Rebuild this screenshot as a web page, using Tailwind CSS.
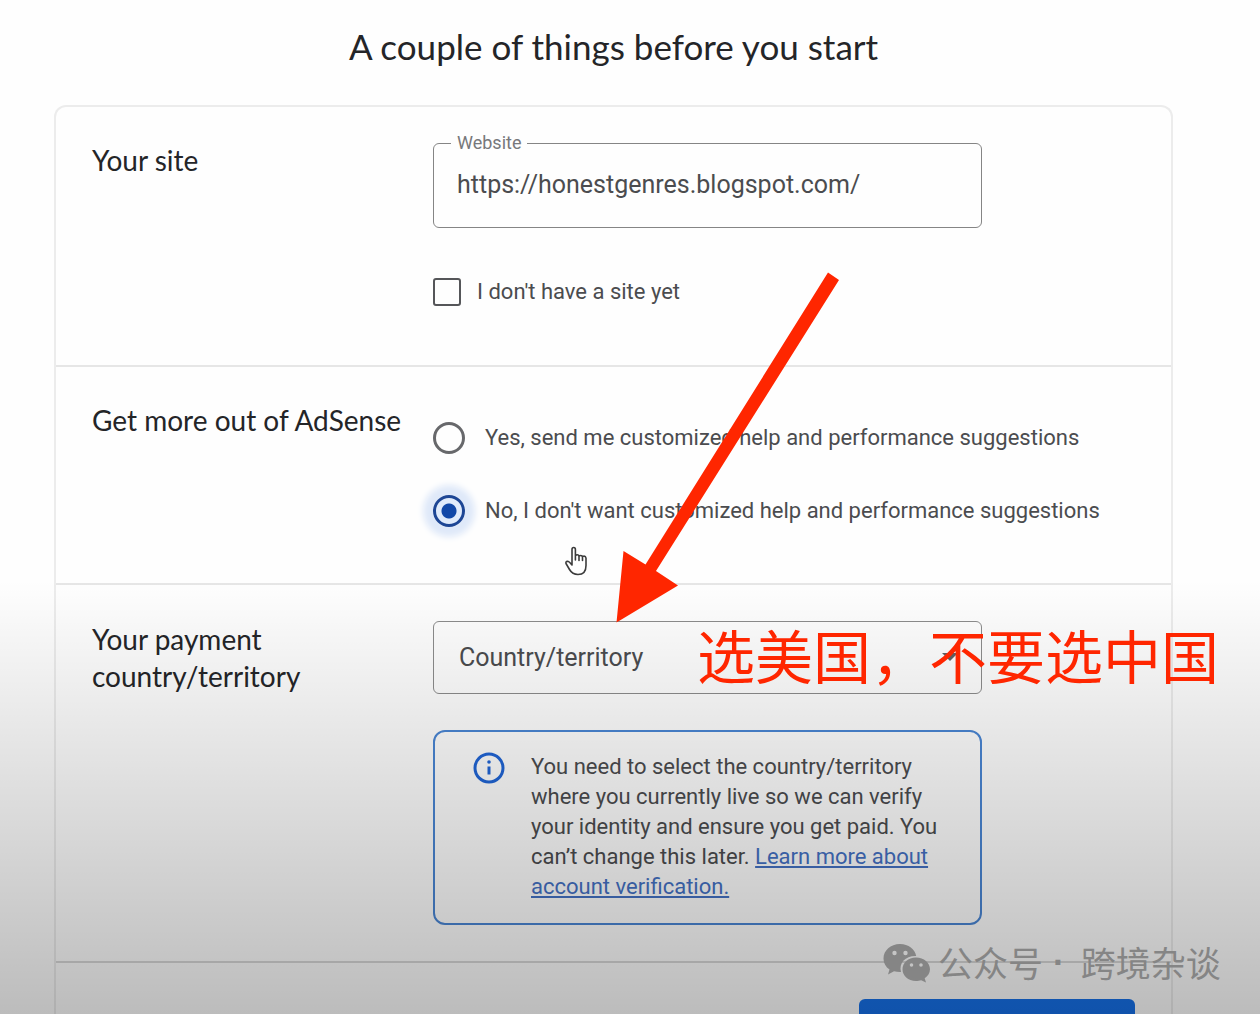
<!DOCTYPE html>
<html lang="en">
<head>
<meta charset="utf-8">
<title>A couple of things before you start</title>
<script src="https://cdn.jsdelivr.net/npm/@tailwindcss/browser@4"></script>
</head>
<body class="relative h-screen overflow-hidden bg-[#fefefe] font-['Roboto',sans-serif] text-[#4b4c4f]">
<main class="mr-[87px] ml-[54px]">
  <h1 class="pt-[22px] pb-[35px] text-center font-['Lato',sans-serif] text-[35px] leading-12 text-[#242528]">A couple of things before you start</h1>
  <form class="rounded-t-xl border-2 border-b-0 border-[#ececec]">
    <section class="grid grid-cols-[341px_1fr] border-b-2 border-[#e6e6e6] pt-6 pb-[57px] pl-9">
      <h2 class="pt-[11px] font-['Lato',sans-serif] text-[28px] leading-9 text-[#242528]">Your site</h2>
      <div class="max-w-[549px]">
        <fieldset class="rounded-md border border-[#858585] px-[23px] pt-3 pb-6">
          <legend class="-ml-1.5 px-1.5 text-[18px] leading-6 text-[#77787b]"><label for="website">Website</label></legend>
          <input id="website" type="url" value="https://honestgenres.blogspot.com/" class="block h-9 w-full bg-transparent text-[25px] outline-none">
        </fieldset>
        <label class="mt-12 flex items-center gap-4 text-[22px] leading-8">
          <input type="checkbox" class="size-7 appearance-none rounded-[3px] border-2 border-[#555659]">
          I don't have a site yet
        </label>
      </div>
    </section>
    <section class="grid grid-cols-[341px_1fr] border-b-2 border-[#e6e6e6] pt-[35px] pb-14 pl-9">
      <h2 class="font-['Lato',sans-serif] text-[28px] leading-9 text-[#242528]">Get more out of AdSense</h2>
      <div class="flex flex-col gap-[41px] pt-5 text-[22px] leading-8" role="radiogroup" aria-label="Get more out of AdSense">
        <label class="flex items-center gap-5">
          <input type="radio" name="help" class="size-8 appearance-none rounded-full border-[3px] border-[#67686b]">
          Yes, send me customized help and performance suggestions
        </label>
        <label class="flex items-center gap-5">
          <input type="radio" name="help" checked class="size-8 appearance-none rounded-full border-[3px] border-[#1d4695] bg-[radial-gradient(circle,#1148a8_7px,#e0ebfb_8px)] shadow-[0_0_6px_10px_#dfe9f9]">
          No, I don't want customized help and performance suggestions
        </label>
      </div>
    </section>
    <section class="grid grid-cols-[341px_1fr] border-b-2 border-[#d8d8d8] pt-9 pb-9 pl-9">
      <h2 class="font-['Lato',sans-serif] text-[28px] leading-[37px] text-[#242528]"><label for="country">Your payment<br>country/territory</label></h2>
      <div class="max-w-[549px]">
        <div class="relative">
          <select id="country" class="block h-[73px] w-full appearance-none rounded-md border border-[#8c8c8c] px-[25px] text-[25px]"><option>Country/territory</option></select>
          <svg class="pointer-events-none absolute top-8 right-6 h-2 w-4" viewBox="0 0 16 8" fill="#606164"><path d="M0 0h16L8 8z"/></svg>
        </div>
        <div class="mt-9 flex gap-[26px] rounded-xl border-2 border-[#4a86d4] px-[38px] pt-5 pb-[21px]">
          <svg class="h-8 w-8 shrink-0" viewBox="0 0 32 32" fill="none"><circle cx="16" cy="16" r="14" stroke="#2065d6" stroke-width="3"/><path d="M16 14.500v8" stroke="#2065d6" stroke-width="3"/><circle cx="16" cy="10" r="1.800" fill="#2065d6"/></svg>
          <p class="text-[22px] leading-[30px] whitespace-nowrap">You need to select the country/territory<br>where you currently live so we can verify<br>your identity and ensure you get paid. You<br>can’t change this later. <a href="#" class="text-[#4471c4] underline">Learn more about<br>account verification.</a></p>
        </div>
      </div>
    </section>
    <div class="flex justify-end px-9 pt-9">
      <button type="button" aria-label="Start using AdSense" class="h-16 w-[276px] rounded-md bg-[#1670e8]"></button>
    </div>
  </form>
</main>
<div class="pointer-events-none absolute inset-x-0 top-[580px] bottom-0 bg-linear-to-b from-black/0 to-black/26"></div>
<svg class="pointer-events-none absolute top-[545px] left-[564px] h-8 w-6" viewBox="0 0 24 32" fill="#fff" stroke="#3c3c3c" stroke-width="1.600" stroke-linejoin="round" stroke-linecap="round"><path d="M8 20V4.500q0-2 1.700-2t1.700 2V11q0-1.200 1.800-1.200T15 11.500q0-1 1.700-1t1.800 1.600q0-1 1.600-1T22 13v7.500c0 6-3 9-8 9-4 0-6.500-1.500-8.500-5L2 18.500q-.5-2 1.500-2.300Q5 16.200 8 20zM11.400 11v4M15 11.500v4M18.500 12v3.500"/></svg>
<svg class="pointer-events-none absolute top-[270px] left-[610px] h-[356px] w-[234px]" viewBox="610 270 234 356" fill="#ff2600"><path d="M828 272.500 839 280 656 571 678 585.500 616.500 622.500 623.500 551 645.500 564.500z"/></svg>
<p class="pointer-events-none absolute top-[618px] left-[697px] font-['Noto_Sans_CJK_SC',sans-serif] text-[58px] leading-[72px] whitespace-nowrap text-[#ff2600]" lang="zh-CN">选美国，不要选中国</p>
<div class="pointer-events-none absolute top-[938px] left-[882px] flex items-center gap-2 text-[#858585]" lang="zh-CN">
  <svg class="h-11 w-12" viewBox="0 0 48 44" fill="currentColor"><path fill-rule="evenodd" d="M18 4C8.500 4 1.500 10.500 1.500 18.500c0 4.800 2.300 8.500 6 11.100L6 34.500l6-3.200c2.300.6 4.300.9 7 .8-2.500-9.500 5-16.500 15.200-16C33 9 26.500 4 18 4zM12.500 10.800a2.200 2.200 0 1 1 0 4.400 2.200 2.200 0 0 1 0-4.400zM23.500 10.800a2.200 2.200 0 1 1 0 4.400 2.200 2.200 0 0 1 0-4.400z"/><path fill-rule="evenodd" d="M34 17.500c-8 0-13.500 5.200-13.500 11.800S26 41 34 41c2 0 3.500-.3 5.200-.8l4.800 2.300-1.300-4.200c3-2.200 5.300-5 5.300-9 0-6.600-6-11.800-14-11.800zM29.500 23.200a1.800 1.800 0 1 1 0 3.600 1.800 1.800 0 0 1 0-3.600zM39 23.200a1.800 1.800 0 1 1 0 3.600 1.800 1.800 0 0 1 0-3.600z"/></svg>
  <p class="flex font-['Noto_Sans_CJK_SC',sans-serif] text-[35px] leading-12 whitespace-nowrap"><span>公众号</span><span class="pr-4 pl-2.5 font-['Liberation_Sans',sans-serif] font-bold">·</span><span>跨境杂谈</span></p>
</div>
</body>
</html>
